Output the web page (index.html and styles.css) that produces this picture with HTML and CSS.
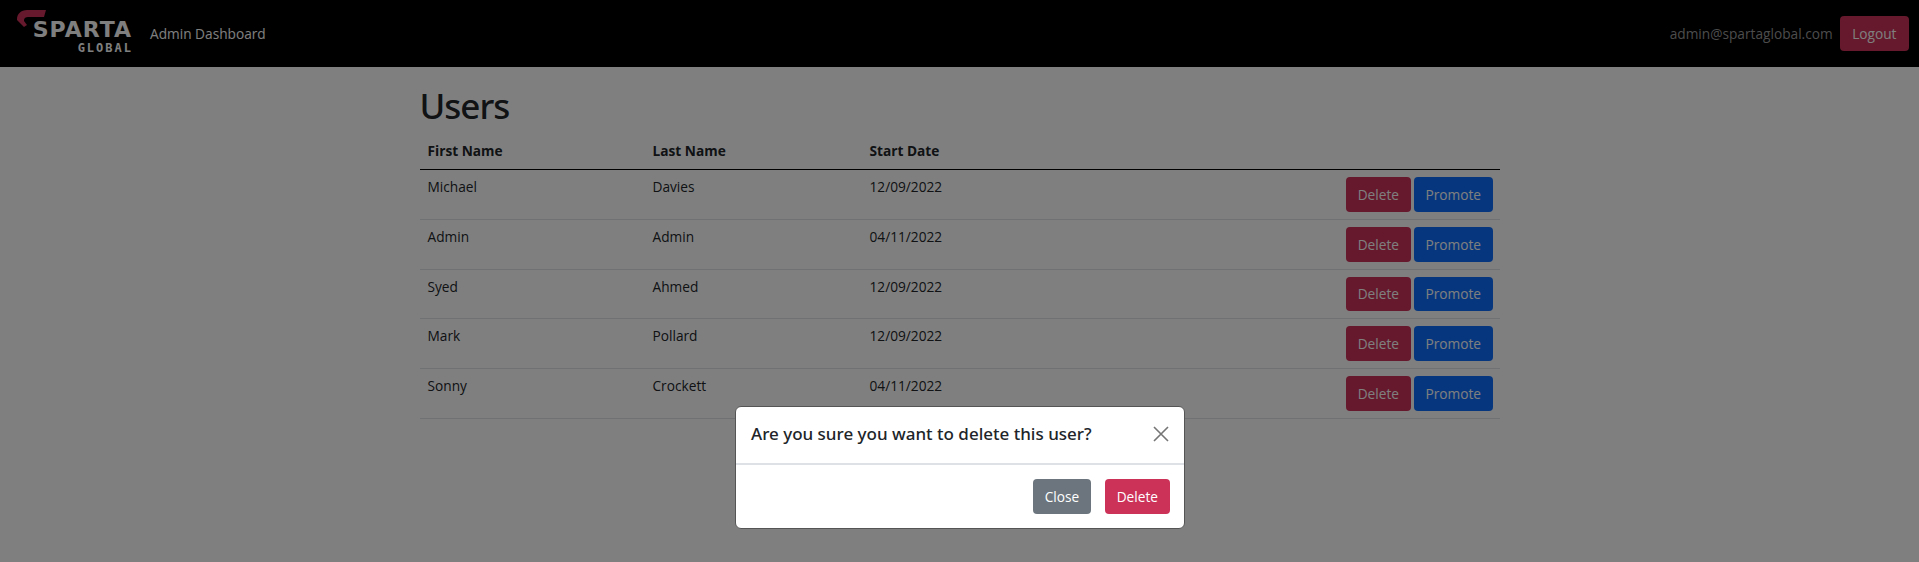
FILE: index.html
```html
<!DOCTYPE html>
<html lang="en">
<head>
    <meta charset="UTF-8">
    <meta name="viewport" content="width=device-width, initial-scale=1.0">
    <title>Users</title>
    <link rel="stylesheet" href="styles.css">
</head>
<body>

    <nav class="navbar">
        <div class="logo">
            <svg class="logo-arc" width="30" height="18" viewBox="0 0 30 18">
                <path d="M29 0 H10 C4 0 0 4 0 9 V10 L7 17 L10 15 L7 11 V10 C7 8 9 7 11 7 H27 Z" fill="#cc3158"/>
            </svg>
            <span class="logo-main">SPARTA</span>
            <span class="logo-sub">GLOBAL</span>
        </div>
        <a class="nav-link" href="#">Admin Dashboard</a>
        <span class="nav-email">admin@spartaglobal.com</span>
        <button class="btn btn-delete btn-logout">Logout</button>
    </nav>

    <main class="container">
        <h1>Users</h1>
        <table>
            <thead>
                <tr>
                    <th class="col-first">First Name</th>
                    <th class="col-last">Last Name</th>
                    <th class="col-date">Start Date</th>
                    <th></th>
                </tr>
            </thead>
            <tbody>
                <tr>
                    <td>Michael</td>
                    <td>Davies</td>
                    <td>12/09/2022</td>
                    <td class="actions"><button class="btn btn-delete">Delete</button> <button class="btn btn-promote">Promote</button></td>
                </tr>
                <tr>
                    <td>Admin</td>
                    <td>Admin</td>
                    <td>04/11/2022</td>
                    <td class="actions"><button class="btn btn-delete">Delete</button> <button class="btn btn-promote">Promote</button></td>
                </tr>
                <tr>
                    <td>Syed</td>
                    <td>Ahmed</td>
                    <td>12/09/2022</td>
                    <td class="actions"><button class="btn btn-delete">Delete</button> <button class="btn btn-promote">Promote</button></td>
                </tr>
                <tr>
                    <td>Mark</td>
                    <td>Pollard</td>
                    <td>12/09/2022</td>
                    <td class="actions"><button class="btn btn-delete">Delete</button> <button class="btn btn-promote">Promote</button></td>
                </tr>
                <tr>
                    <td>Sonny</td>
                    <td>Crockett</td>
                    <td>04/11/2022</td>
                    <td class="actions"><button class="btn btn-delete">Delete</button> <button class="btn btn-promote">Promote</button></td>
                </tr>
            </tbody>
        </table>
    </main>

    <div class="backdrop"></div>

    <div class="modal">
        <div class="modal-header">
            <h5>Are you sure you want to delete this user?</h5>
            <svg class="modal-close" width="16" height="16" viewBox="0 0 16 16">
                <path d="M1 1 L15 15 M15 1 L1 15" stroke="#757575" stroke-width="1.6" fill="none"/>
            </svg>
        </div>
        <div class="modal-footer">
            <button class="btn btn-close">Close</button>
            <button class="btn btn-delete">Delete</button>
        </div>
    </div>

</body>
</html>
```

FILE: styles.css
```css
* {
    box-sizing: border-box;
}

body {
    margin: 0;
    height: 562px;
    overflow: hidden;
    font-family: "Open Sans", "Noto Sans", sans-serif;
    font-size: 13.7px;
    line-height: 21px;
    color: #212529;
    background-color: #fff;
}

.navbar {
    display: flex;
    align-items: center;
    height: 67px;
    padding: 0 10px 0 16px;
    background-color: #000;
}

.logo {
    position: relative;
    display: flex;
    flex-direction: column;
    align-items: flex-end;
    width: 115px;
    height: 67px;
    padding-top: 19px;
    margin-right: 19px;
    color: #fff;
    font-family: "DejaVu Sans", sans-serif;
    font-weight: bold;
}

.logo-arc {
    position: absolute;
    left: 1px;
    top: 10px;
}

.logo-main {
    font-size: 22px;
    line-height: 22px;
    letter-spacing: 1px;
    margin-right: -1px;
}

.logo-sub {
    font-family: "DejaVu Sans Mono", monospace;
    font-size: 12px;
    line-height: 12px;
    letter-spacing: 2px;
    margin-top: 1px;
    margin-right: -2px;
}

.nav-link {
    color: #fff;
    text-decoration: none;
}

.nav-email {
    margin-left: auto;
    margin-right: 7px;
    color: #999;
}

.container {
    width: 1104px;
    margin: 0 auto;
    padding: 0 12px;
}

h1 {
    height: 67px;
    margin: 0;
    padding-top: 18px;
    font-family: "Noto Sans", sans-serif;
    font-size: 35px;
    font-weight: 500;
    line-height: 1.2;
    letter-spacing: -1px;
}

table {
    width: 100%;
    border-collapse: collapse;
}

th {
    padding: 6px 7px 8px 8px;
    text-align: left;
    font-weight: bold;
    border-bottom: 1px solid #000;
}

td {
    padding: 6px 7px 7px 8px;
    vertical-align: top;
    border-bottom: 1px solid #dee2e6;
}

.col-first {
    width: 225px;
}

.col-last {
    width: 217px;
}

.col-date {
    width: 150px;
}

.actions {
    padding-top: 7px;
    padding-bottom: 7px;
    text-align: right;
    font-size: 0;
}

.btn {
    height: 35px;
    padding: 0 11px;
    font-family: inherit;
    font-size: 13.7px;
    line-height: 21px;
    color: #fff;
    border: 1px solid transparent;
    border-radius: 4px;
    vertical-align: top;
}

.actions .btn {
    height: 34.8px;
}

.btn-logout {
    padding: 0 11.5px;
}

.btn-delete {
    background-color: #cc3158;
}

.btn-promote {
    margin-left: 3px;
    padding: 0 10.5px;
    background-color: #0d6efd;
}

.btn-close {
    padding: 0 10.5px;
    background-color: #6c757d;
}

.backdrop {
    position: fixed;
    inset: 0;
    background-color: rgba(0, 0, 0, 0.5);
}

.modal {
    position: fixed;
    left: 735px;
    top: 406px;
    width: 450px;
    height: 123px;
    background-color: #fff;
    border: 1px solid #555;
    border-radius: 6px;
}

.modal-header {
    display: flex;
    align-items: center;
    justify-content: space-between;
    height: 58px;
    padding: 0 15px 2px 15px;
    border-bottom: 2px solid #dee2e6;
}

h5 {
    margin: 0;
    font-family: "Noto Sans", sans-serif;
    font-size: 17px;
    font-weight: 500;
    line-height: 1.5;
}

.modal-footer {
    display: flex;
    justify-content: flex-end;
    gap: 14px;
    padding: 14px;
}
```
